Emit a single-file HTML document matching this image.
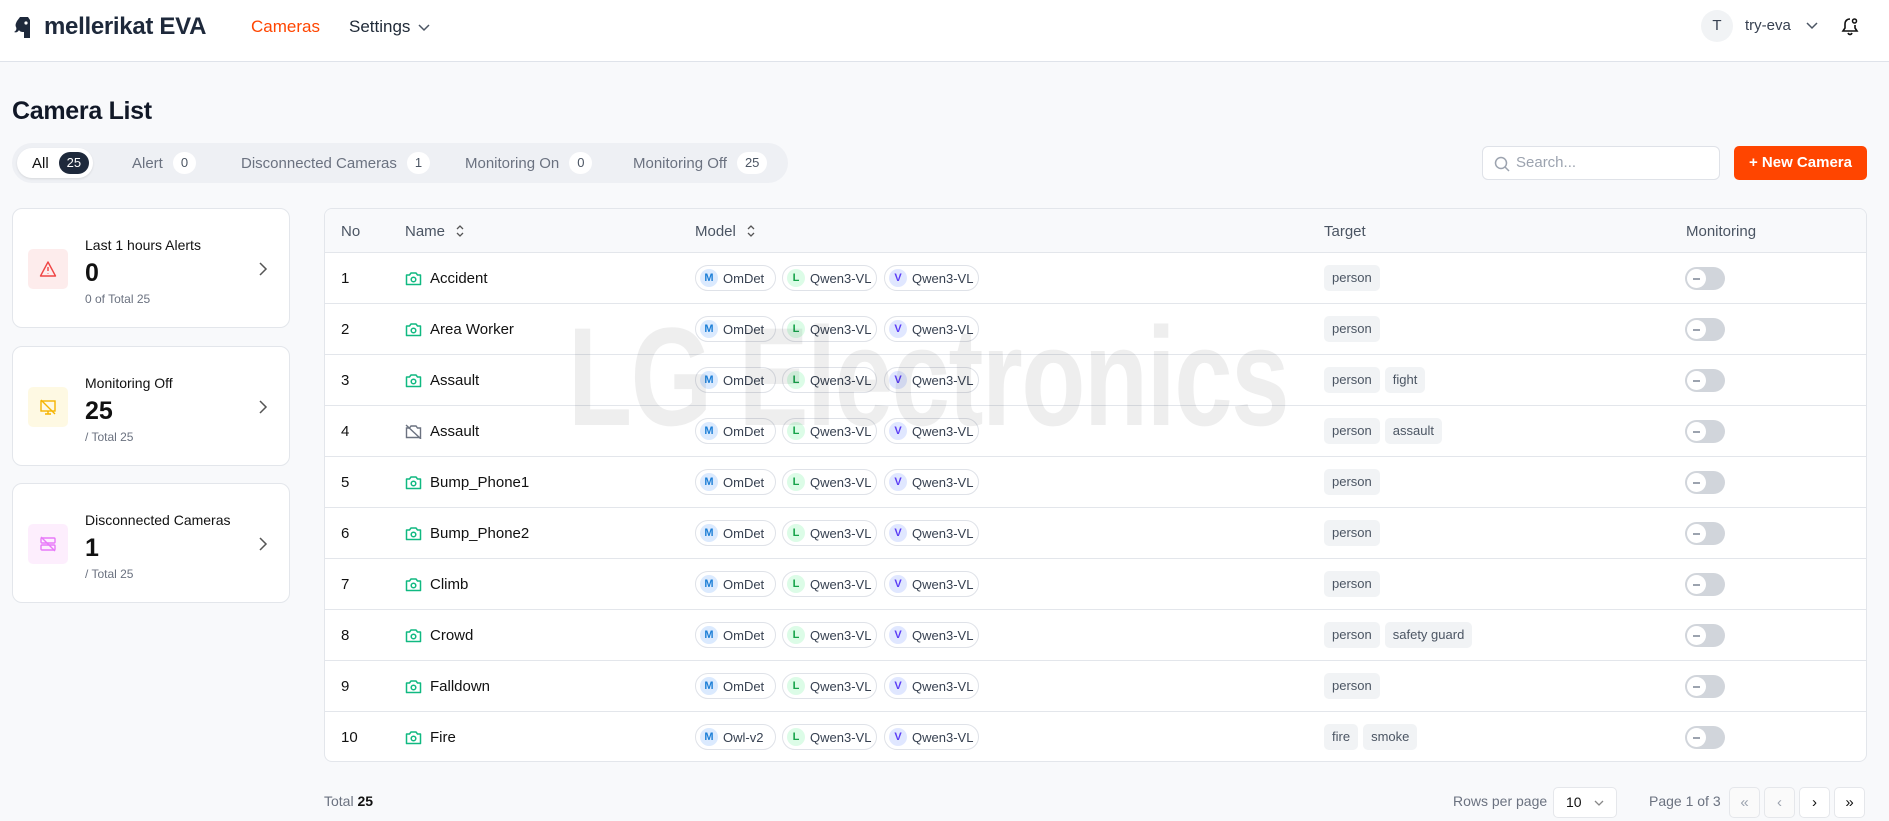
<!DOCTYPE html>
<html><head><meta charset="utf-8">
<style>
*{box-sizing:border-box;margin:0;padding:0}
body{width:1889px;height:821px;overflow:hidden;background:#f8f9fb;font-family:"Liberation Sans",sans-serif;color:#1f2937;position:relative;white-space:nowrap}
.hdr{position:absolute;left:0;top:0;width:1889px;height:62px;background:#fff;border-bottom:1px solid #dfe3ea}
.abs{position:absolute}
.logo{left:12px;top:13px;font-size:24px;font-weight:bold;color:#1e293b;display:flex;align-items:center;gap:6px;letter-spacing:-.3px}
.nav{font-size:17px;top:17px}
.title{left:12px;top:97px;font-size:25px;font-weight:bold;color:#111827;letter-spacing:-.3px}
.tabs{left:12px;top:143px;width:776px;height:40px;background:#eef0f4;border-radius:20px;font-size:15px;color:#6b7280}
.tab{position:absolute;top:5px;display:flex;align-items:center;height:30px;padding:0 4px 0 0;border-radius:16px}
.tab .b{margin-left:10px;background:#fff;border-radius:11px;padding:0 8px;height:22px;line-height:22px;font-size:13px;color:#4b5563}
.tab.on{background:#fff;color:#111;box-shadow:0 1px 2px rgba(0,0,0,.1);padding-left:15px}
.tab.on .b{background:#1e293b;color:#fff}
.search{left:1482px;top:146px;width:238px;height:34px;background:#fff;border:1px solid #dfe2e8;border-radius:6px;font-size:15px;color:#9ca3af;padding-left:33px;line-height:32px}
.btn{left:1734px;top:146px;width:133px;height:34px;background:#ff4500;border-radius:5px;color:#fff;font-size:15px;font-weight:bold;line-height:34px;text-align:center}
.card{left:12px;width:278px;height:120px;background:#fff;border:1px solid #e3e6eb;border-radius:10px}
.card .ic{position:absolute;left:15px;top:40px;width:40px;height:40px;border-radius:5px;display:flex;align-items:center;justify-content:center}
.card .t{position:absolute;left:72px;top:28px;font-size:14px;color:#111}
.card .v{position:absolute;left:72px;top:50px;font-size:25px;font-weight:bold;color:#111}
.card .s{position:absolute;left:72px;top:83px;font-size:12px;color:#6b7280}
.card .ch{position:absolute;left:245px;top:52px}
.tbl{left:324px;top:208px;width:1543px;height:554px;background:#fff;border:1px solid #e3e6eb;border-radius:8px;overflow:hidden}
.th{position:absolute;left:0;top:0;width:100%;height:44px;background:#f8f9fb;border-bottom:1px solid #e3e6eb;font-size:15px;color:#4b5563}
.th span,.row span.c{position:absolute}
.row{position:absolute;left:0;width:100%;height:51px;border-bottom:1px solid #e3e6eb;font-size:15px;color:#111}
.chip{position:absolute;top:12px;height:26px;border:1px solid #dfe2e8;border-radius:13px;font-size:13px;color:#374151;display:flex;align-items:center;padding:0 0 0 4px;background:#fff;white-space:nowrap}
.chip i{font-style:normal;width:18px;height:18px;border-radius:9px;font-size:11px;font-weight:bold;display:inline-flex;align-items:center;justify-content:center;margin-right:5px;flex:none}
.m{background:#dbeafe;color:#1d7fd6}.l{background:#dcfce7;color:#16a34a}.vv{background:#e0e7ff;color:#5b3df5}
.tags{position:absolute;left:999px;top:12px;display:flex;gap:5px}
.tag{height:26px;line-height:26px;padding:0 8px;background:#f1f3f5;border-radius:5px;font-size:13px;color:#4b5563}
.tog{position:absolute;left:1360px;top:14px;width:40px;height:23px;background:#d1d5db;border-radius:12px}
.tog:after{content:"";position:absolute;left:2px;top:2px;width:19px;height:19px;border-radius:10px;background:#fff}
.tog:before{content:"";position:absolute;left:8px;top:11px;width:7px;height:1.5px;background:#9ca3af;z-index:2}
.wm{left:568px;top:296px;font-size:140px;font-weight:bold;color:rgba(0,0,0,.065);transform:scaleX(.75);transform-origin:0 0;white-space:nowrap;letter-spacing:-2px;pointer-events:none}
.pb{position:absolute;top:787px;width:31px;height:31px;border:1px solid #e5e7eb;border-radius:5px;background:#fafafa;text-align:center;line-height:29px;font-size:15px;color:#9ca3af}
</style></head><body>
<div class="hdr">
 <div class="abs logo"><svg width="26" height="26" viewBox="0 0 26 26"><path d="M8 3h8l2 3v18h-6v-6c-2 0-4 0-5-2-1 2-3 3-5 2 2-1 3-3 2-5-1-2 0-4 1-6z" fill="#1e293b"/><circle cx="14" cy="9" r="1.6" fill="#fff"/></svg>mellerikat EVA</div>
 <div class="abs nav" style="left:251px;color:#ff4500">Cameras</div>
 <div class="abs nav" style="left:349px;color:#1f2937">Settings <svg width="12" height="8" style="margin-left:3px"><path d="M1 1l5 5 5-5" stroke="#4b5563" stroke-width="1.5" fill="none"/></svg></div>
 <div class="abs" style="left:1701px;top:10px;width:32px;height:32px;border-radius:16px;background:#f1f3f5;text-align:center;line-height:32px;font-size:15px;color:#374151">T</div>
 <div class="abs" style="left:1745px;top:17px;font-size:15px;color:#374151">try-eva</div>
 <svg class="abs" style="left:1806px;top:22px" width="12" height="8"><path d="M1 1l5 5 5-5" stroke="#4b5563" stroke-width="1.5" fill="none"/></svg>
 <svg class="abs" style="left:1840px;top:16px" width="20" height="20" viewBox="0 0 20 20"><path d="M10 3c-3 0-5 2-5 5v4l-2 3h14l-2-3V9M8 17c.5 1 1.5 1.5 2 1.5s1.5-.5 2-1.5" stroke="#111" stroke-width="1.6" fill="none"/><circle cx="14.5" cy="5" r="2" stroke="#111" stroke-width="1.5" fill="none"/></svg>
</div>
<div class="abs title">Camera List</div>
<div class="abs tabs">
 <div class="tab on" style="left:5px">All<span class="b">25</span></div>
 <div class="tab" style="left:120px">Alert<span class="b">0</span></div>
 <div class="tab" style="left:229px">Disconnected Cameras<span class="b">1</span></div>
 <div class="tab" style="left:453px">Monitoring On<span class="b">0</span></div>
 <div class="tab" style="left:621px">Monitoring Off<span class="b">25</span></div>
</div>
<div class="abs search"><svg class="abs" style="left:11px;top:9px" width="16" height="16"><circle cx="7" cy="7" r="5.5" stroke="#9ca3af" stroke-width="1.5" fill="none"/><path d="M11 11l4 4" stroke="#9ca3af" stroke-width="1.5"/></svg>Search...</div>
<div class="abs btn">+ New Camera</div>

<div class="abs card" style="top:208px"><div class="ic" style="background:#fdecec"><svg width="18" height="18" viewBox="0 0 18 18"><path d="M9 2L1.5 16h15z" stroke="#ef4444" stroke-width="1.4" fill="none" stroke-linejoin="round"/><path d="M9 7v4M9 13v.5" stroke="#ef4444" stroke-width="1.4"/></svg></div><div class="t">Last 1 hours Alerts</div><div class="v">0</div><div class="s">0 of Total 25</div><svg class="ch" width="10" height="16"><path d="M2 2l6 6-6 6" stroke="#555" stroke-width="1.5" fill="none"/></svg></div>
<div class="abs card" style="top:346px"><div class="ic" style="background:#fef9e3"><svg width="18" height="18" viewBox="0 0 18 18"><rect x="2" y="3" width="14" height="10" stroke="#f5b400" stroke-width="1.4" fill="none"/><path d="M6 16h6M9 13v3M2 2l14 14" stroke="#f5b400" stroke-width="1.4"/></svg></div><div class="t">Monitoring Off</div><div class="v">25</div><div class="s">/ Total 25</div><svg class="ch" width="10" height="16"><path d="M2 2l6 6-6 6" stroke="#555" stroke-width="1.5" fill="none"/></svg></div>
<div class="abs card" style="top:483px"><div class="ic" style="background:#fdeefd"><svg width="18" height="18" viewBox="0 0 18 18"><rect x="2" y="3" width="14" height="5" rx="1" stroke="#e879f9" stroke-width="1.4" fill="none"/><rect x="2" y="10" width="14" height="5" rx="1" stroke="#e879f9" stroke-width="1.4" fill="none"/><path d="M2 2l14 14" stroke="#e879f9" stroke-width="1.4"/></svg></div><div class="t">Disconnected Cameras</div><div class="v">1</div><div class="s">/ Total 25</div><svg class="ch" width="10" height="16"><path d="M2 2l6 6-6 6" stroke="#555" stroke-width="1.5" fill="none"/></svg></div>

<div class="abs tbl">
 <div class="th"><span style="left:16px;top:14px">No</span><span style="left:80px;top:14px">Name</span><svg style="position:absolute;left:130px;top:15px" width="10" height="14"><path d="M2 5l3-3 3 3M2 9l3 3 3-3" stroke="#555" stroke-width="1.3" fill="none"/></svg><span style="left:370px;top:14px">Model</span><svg style="position:absolute;left:421px;top:15px" width="10" height="14"><path d="M2 5l3-3 3 3M2 9l3 3 3-3" stroke="#555" stroke-width="1.3" fill="none"/></svg><span style="left:999px;top:14px">Target</span><span style="left:1361px;top:14px">Monitoring</span></div>
 <div id="rows"></div>
</div>
<div class="abs wm">LG Electronics</div>
<div class="abs" style="left:324px;top:793px;font-size:14px;color:#6b7280">Total <b style="color:#111">25</b></div>
<div class="abs" style="left:1453px;top:793px;font-size:14px;color:#6b7280">Rows per page</div>
<div class="abs" style="left:1553px;top:787px;width:64px;height:31px;background:#fff;border:1px solid #e5e7eb;border-radius:5px;font-size:14px;line-height:29px;padding-left:12px;color:#111">10 <svg width="10" height="7" style="margin-left:9px"><path d="M1 1l4 4 4-4" stroke="#888" stroke-width="1.3" fill="none"/></svg></div>
<div class="abs" style="left:1649px;top:793px;font-size:14px;color:#6b7280">Page 1 of 3</div>
<div class="pb" style="left:1729px">&laquo;</div><div class="pb" style="left:1764px">&lsaquo;</div><div class="pb" style="left:1799px;background:#fff;color:#111">&rsaquo;</div><div class="pb" style="left:1834px;background:#fff;color:#111">&raquo;</div>
<script>
var d=[["Accident","OmDet",["person"]],["Area Worker","OmDet",["person"]],["Assault","OmDet",["person","fight"]],["Assault","OmDet",["person","assault"],1],["Bump_Phone1","OmDet",["person"]],["Bump_Phone2","OmDet",["person"]],["Climb","OmDet",["person"]],["Crowd","OmDet",["person","safety guard"]],["Falldown","OmDet",["person"]],["Fire","Owl-v2",["fire","smoke"]]];
var h="";
var cam='<svg width="17" height="15" viewBox="0 0 17 15"><path d="M1.5 4h3l1.5-2h5l1.5 2h3v9.5h-14z" stroke="#10b981" stroke-width="1.5" fill="none" stroke-linejoin="round"/><circle cx="8.5" cy="8.5" r="2.3" stroke="#10b981" stroke-width="1.5" fill="none"/></svg>';
var camoff='<svg width="17" height="15" viewBox="0 0 17 15"><path d="M1.5 4h3l1.5-2h5l1.5 2h3v9.5h-14z" stroke="#6b7280" stroke-width="1.4" fill="none"/><path d="M1 1l15 14" stroke="#6b7280" stroke-width="1.4"/></svg>';
d.forEach(function(r,i){
 var tg='<div class="tags">';
 r[2].forEach(function(t){tg+='<div class="tag">'+t+'</div>';});
 tg+='</div>';
 h+='<div class="row" style="top:'+(44+i*51)+'px"><span class="c" style="left:16px;top:17px">'+(i+1)+'</span><span class="c" style="left:80px;top:18px">'+(r[3]?camoff:cam)+'</span><span class="c" style="left:105px;top:17px">'+r[0]+'</span>'+
 '<div class="chip" style="left:370px;width:81px"><i class="m">M</i>'+r[1]+'</div><div class="chip" style="left:457px;width:95px"><i class="l">L</i>Qwen3-VL</div><div class="chip" style="left:559px;width:95px"><i class="vv">V</i>Qwen3-VL</div>'+tg+'<div class="tog"></div></div>';
});
document.getElementById("rows").innerHTML=h;
</script>
</body></html>
